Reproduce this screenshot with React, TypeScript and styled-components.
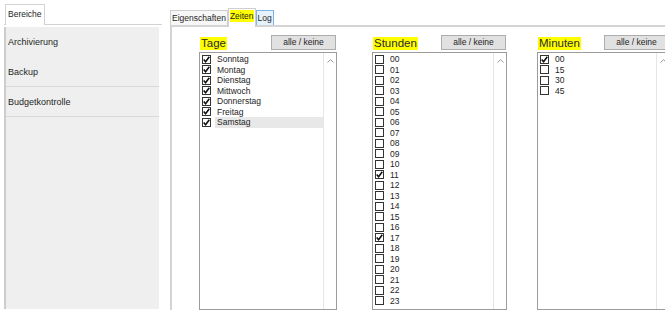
import React from "react";
import styled, { createGlobalStyle } from "styled-components";

const GlobalStyle = createGlobalStyle`
  html, body {
    margin: 0;
    padding: 0;
    background: #ffffff;
  }
  body {
    font-family: "Liberation Sans", Arial, sans-serif;
    color: #1e1e1e;
    overflow: hidden;
  }
`;

const days = [
  "Sonntag",
  "Montag",
  "Dienstag",
  "Mittwoch",
  "Donnerstag",
  "Freitag",
  "Samstag",
];
const hours = Array.from({ length: 24 }, (_, i) => String(i).padStart(2, "0"));
const minutes = ["00", "15", "30", "45"];

type Entry = { label: string; checked: boolean; selected?: boolean };

const Check = () => (
  <svg width="7" height="7" viewBox="0 0 7 7">
    <path d="M0.7 3.5 L2.6 5.7 L6.3 0.8" fill="none" stroke="#111" strokeWidth="1.6" />
  </svg>
);

const UpArrow = () => (
  <svg width="7" height="4" viewBox="0 0 7 4">
    <path d="M0.5 3.5 L3.5 0.7 L6.5 3.5" fill="none" stroke="#9a9a9a" strokeWidth="1" />
  </svg>
);

const TimeList = ({ title, width, offset, entries }: {
  title: string;
  width: number;
  offset: number;
  entries: Entry[];
}) => (
  <Column $width={width} $offset={offset}>
    <ColumnHead>
      <Label>{title}</Label>
      <AllButton>alle / keine</AllButton>
    </ColumnHead>
    <ListBox>
      <Items>
        {entries.map((e) => (
          <Row key={e.label}>
            <Box>{e.checked && <Check />}</Box>
            <RowText $selected={!!e.selected}>{e.label}</RowText>
          </Row>
        ))}
      </Items>
      <ScrollBar>
        <UpArrow />
      </ScrollBar>
    </ListBox>
  </Column>
);

const App = () => {
  const dayEntries = days.map((d) => ({ label: d, checked: true, selected: d === "Samstag" }));
  const hourEntries = hours.map((h) => ({ label: h, checked: h === "11" || h === "17" }));
  const minuteEntries = minutes.map((m) => ({ label: m, checked: m === "00" }));

  return (
    <>
      <GlobalStyle />
      <Page>
        <Sidebar>
          <SideTabRow>
            <SideTab>Bereiche</SideTab>
          </SideTabRow>
          <SideBody>
            <SideItem>Archivierung</SideItem>
            <SideItem $divided>Backup</SideItem>
            <SideItem $divided>Budgetkontrolle</SideItem>
          </SideBody>
        </Sidebar>
        <Main>
          <TabStrip>
            <Tab>Eigenschaften</Tab>
            <Tab $active>
              <Mark>Zeiten</Mark>
            </Tab>
            <Tab $hover>Log</Tab>
          </TabStrip>
          <Panel>
            <TimeList title="Tage" width={138} offset={0} entries={dayEntries} />
            <TimeList title="Stunden" width={135} offset={35} entries={hourEntries} />
            <TimeList title="Minuten" width={133} offset={30} entries={minuteEntries} />
          </Panel>
        </Main>
      </Page>
    </>
  );
};

export default App;

const Page = styled.div`
  display: flex;
  width: 665px;
  height: 319px;
  overflow: hidden;
`;

const Sidebar = styled.div`
  width: 170px;
  flex-shrink: 0;
  display: flex;
  flex-direction: column;
  padding: 4px 0 10px 4px;
  box-sizing: border-box;
`;

const SideTabRow = styled.div`
  display: flex;
  width: 158px;
  height: 20px;
  border-bottom: 1px solid #d2d2d2;
`;

const SideTab = styled.div`
  height: 21px;
  margin-left: 1px;
  margin-bottom: -1px;
  padding: 0 2px;
  border: 1px solid #d2d2d2;
  border-bottom: none;
  background: #ffffff;
  font-size: 8.5px;
  line-height: 19px;
  box-sizing: border-box;
`;

const SideBody = styled.div`
  flex: 1;
  margin-top: 2px;
  width: 155px;
  box-sizing: border-box;
  background: #efefef;
  border-left: 2px solid #cdcdcd;
  display: flex;
  flex-direction: column;
`;

const SideItem = styled.div<{ $divided?: boolean }>`
  height: 29px;
  display: flex;
  align-items: center;
  padding-left: 2px;
  font-size: 9px;
  color: #1e1e1e;
  border-bottom: 1px solid ${(p) => (p.$divided ? "#d9d9d9" : "transparent")};
`;

const Main = styled.div`
  flex: 1;
  display: flex;
  flex-direction: column;
  padding-top: 8px;
  padding-bottom: 9px;
  min-width: 0;
`;

const TabStrip = styled.div`
  display: flex;
  align-items: flex-end;
  height: 17px;
  border-bottom: 2px solid #d4d4d4;
`;

const Tab = styled.div<{ $active?: boolean; $hover?: boolean }>`
  height: ${(p) => (p.$active ? "19px" : "15px")};
  margin-bottom: ${(p) => (p.$active ? "-2px" : "0")};
  padding: 0 1px;
  border: 1px solid ${(p) => (p.$hover ? "#7eb4ea" : "#cfcfcf")};
  border-bottom: none;
  background: ${(p) => (p.$hover ? "#e5f1fb" : p.$active ? "#ffffff" : "#f7f7f7")};
  font-size: 8.5px;
  line-height: ${(p) => (p.$active ? "15px" : "14px")};
  box-sizing: border-box;
  color: #1e1e1e;
`;

const Mark = styled.span`
  background: #ffff00;
  padding: 1px 0;
`;

const Panel = styled.div`
  flex: 1;
  display: flex;
  border-left: 2px solid #d4d4d4;
  padding: 8px 0 0 27px;
`;

const Column = styled.div<{ $width: number; $offset: number }>`
  width: ${(p) => p.$width}px;
  margin-left: ${(p) => p.$offset}px;
  flex-shrink: 0;
  display: flex;
  flex-direction: column;
`;

const ColumnHead = styled.div`
  display: flex;
  justify-content: space-between;
  align-items: flex-end;
  height: 15px;
  margin-bottom: 2px;
  padding: 0 1px;
`;

const Label = styled.span`
  background: #ffff00;
  font-size: 11.5px;
  line-height: 13px;
  padding: 0 1px;
  color: #2a2a2a;
`;

const AllButton = styled.div`
  width: 65px;
  height: 15px;
  box-sizing: border-box;
  background: #e1e1e1;
  border: 1px solid #adadad;
  font-size: 8.5px;
  line-height: 13px;
  text-align: center;
  color: #1e1e1e;
`;

const ListBox = styled.div`
  flex: 1;
  display: flex;
  border: 1px solid #9c9c9c;
  background: #ffffff;
`;

const Items = styled.div`
  flex: 1;
  padding: 1px 0 0 2px;
`;

const Row = styled.div`
  height: 10.5px;
  display: flex;
  align-items: center;
`;

const Box = styled.div`
  width: 9px;
  height: 9px;
  box-sizing: border-box;
  border: 1px solid #333333;
  background: #ffffff;
  display: flex;
  align-items: center;
  justify-content: center;
  flex-shrink: 0;
`;

const RowText = styled.div<{ $selected: boolean }>`
  flex: 1;
  margin-left: 4px;
  padding-left: 2px;
  height: 10.5px;
  line-height: 10.5px;
  font-size: 8.5px;
  color: #1e1e1e;
  background: ${(p) => (p.$selected ? "#e8e8e8" : "transparent")};
`;

const ScrollBar = styled.div`
  width: 12px;
  border-left: 1px solid #e6e6e6;
  display: flex;
  justify-content: center;
  padding-top: 6px;
`;
